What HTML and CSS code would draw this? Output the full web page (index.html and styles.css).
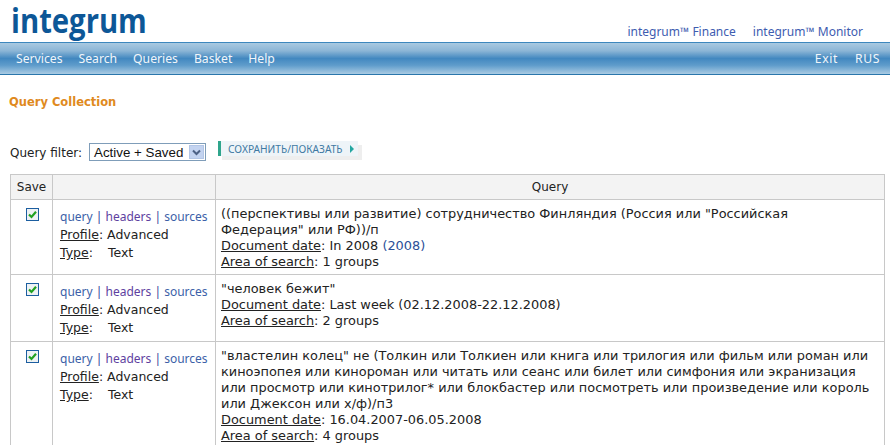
FILE: index.html
```html
<!DOCTYPE html>
<html lang="en">
<head>
<meta charset="utf-8">
<title>Query Collection</title>
<link rel="stylesheet" href="styles.css">
</head>
<body>
<header class="top">
  <div class="logo">integrum</div>
  <div class="products">
    <a href="#">integrum™ Finance</a>
    <a href="#">integrum™ Monitor</a>
  </div>
</header>
<nav class="menu">
  <div class="menu-group">
    <a href="#">Services</a><a href="#">Search</a><a href="#">Queries</a><a href="#">Basket</a><a href="#">Help</a>
  </div>
  <div class="menu-group right">
    <a href="#">Exit</a><a href="#">RUS</a>
  </div>
</nav>
<main class="content">
  <h1 class="title">Query Collection</h1>
  <div class="filter">
    <label class="filter-label">Query filter:</label>
    <div class="select"><span class="select-value">Active + Saved</span><span class="select-arrow"><svg width="9" height="7" viewBox="0 0 9 7"><path d="M1 1.5 4.5 5 8 1.5" fill="none" stroke="#4d6185" stroke-width="2"/></svg></span></div>
    <div class="save-btn"><span class="save-text">СОХРАНИТЬ/ПОКАЗАТЬ</span><span class="save-arrow"></span></div>
  </div>
  <table class="grid">
    <colgroup><col class="c1"><col class="c2"><col class="c3"></colgroup>
    <thead>
      <tr><th>Save</th><th></th><th>Query</th></tr>
    </thead>
    <tbody>
      <tr>
        <td class="check"><span class="box"><svg width="11" height="11" viewBox="0 0 11 11"><path d="M2 5.5 4.5 8 9 2.8" fill="none" stroke="#21a121" stroke-width="2.2"/></svg></span></td>
        <td class="meta"><div class="links"><a href="#" class="blue">query</a> | <a href="#">headers</a> | <a href="#" class="blue">sources</a></div><div><u>Profile</u>: Advanced</div><div><u>Type</u>:<span class="type-value">Text</span></div></td>
        <td class="query">((перспективы или развитие) сотрудничество Финляндия (Россия или "Российская Федерация" или РФ))/п<br><u>Document date</u>: In 2008 <span class="navy">(2008)</span><br><u>Area of search</u>: 1 groups</td>
      </tr>
      <tr>
        <td class="check"><span class="box"><svg width="11" height="11" viewBox="0 0 11 11"><path d="M2 5.5 4.5 8 9 2.8" fill="none" stroke="#21a121" stroke-width="2.2"/></svg></span></td>
        <td class="meta"><div class="links"><a href="#" class="blue">query</a> | <a href="#">headers</a> | <a href="#" class="blue">sources</a></div><div><u>Profile</u>: Advanced</div><div><u>Type</u>:<span class="type-value">Text</span></div></td>
        <td class="query">"человек бежит"<br><u>Document date</u>: Last week (02.12.2008-22.12.2008)<br><u>Area of search</u>: 2 groups</td>
      </tr>
      <tr>
        <td class="check"><span class="box"><svg width="11" height="11" viewBox="0 0 11 11"><path d="M2 5.5 4.5 8 9 2.8" fill="none" stroke="#21a121" stroke-width="2.2"/></svg></span></td>
        <td class="meta"><div class="links"><a href="#" class="blue">query</a> | <a href="#">headers</a> | <a href="#" class="blue">sources</a></div><div><u>Profile</u>: Advanced</div><div><u>Type</u>:<span class="type-value">Text</span></div></td>
        <td class="query">"властелин колец" не (Толкин или Толкиен или книга или трилогия или фильм или роман или киноэпопея или кинороман или читать или сеанс или билет или симфония или экранизация или просмотр или кинотрилог* или блокбастер или посмотреть или произведение или король или Джексон или х/ф)/п3<br><u>Document date</u>: 16.04.2007-06.05.2008<br><u>Area of search</u>: 4 groups</td>
      </tr>
    </tbody>
  </table>
</main>
</body>
</html>
```
FILE: styles.css
```css
html, body { margin: 0; padding: 0; height: 445px; overflow: hidden; background: #fff; }
body { font-family: "DejaVu Sans", Verdana, sans-serif; font-size: 12px; color: #222; }
a { text-decoration: none; }
.top { height: 42px; display: flex; justify-content: space-between; align-items: flex-end; box-sizing: border-box; }
.logo { font-family: "Open Sans", "Noto Sans", sans-serif; font-weight: 700; font-size: 34px; line-height: 36px; color: #0d5797; margin: 0 0 4px 11px; transform: scaleX(0.86); transform-origin: left center; }
.products { display: flex; gap: 17px; margin-right: 27px; margin-bottom: 2px; font-family: "Noto Sans", sans-serif; font-size: 12px; line-height: 16px; }
.products a { color: #3e5cb0; }
.menu { height: 33px; box-sizing: border-box; border-top: 1px solid #3d87bd; border-bottom: 1px solid #2a76ab; display: flex; justify-content: space-between; align-items: center; background: linear-gradient(#a9c9e1 0%, #8cb6d6 25%, #4288c0 50%, #5f9ccb 72%, #a9cbe3 100%); font-family: "Noto Sans", sans-serif; font-size: 12.2px; }
.menu-group { display: flex; gap: 16px; margin-left: 16px; }
.menu-group.right { margin: 0 10px 0 0; gap: 17px; letter-spacing: 0.6px; }
.menu a { color: #f2f6fa; }
.content { padding: 0 10px; }
.title { margin: 20px 0 0 -1px; font-family: "DejaVu Sans", sans-serif; font-size: 11.5px; line-height: 15px; font-weight: 700; color: #e08a1d; }
.filter { display: flex; align-items: flex-start; margin-top: 30px; height: 34px; }
.filter-label { margin-top: 5px; line-height: 16px; font-size: 12px; font-family: "DejaVu Sans", sans-serif; }
.select { width: 115px; height: 16px; margin: 3px 0 0 7px; border: 1px solid #7f9db9; display: flex; align-items: center; justify-content: space-between; box-sizing: content-box; font-family: "Liberation Sans", sans-serif; font-size: 13.33px; color: #111; }
.select-value { margin-left: 4px; }
.select-arrow { width: 15px; height: 14px; margin-right: 1px; background: #c3d3f0; border: 1px solid #b3c6e6; box-sizing: border-box; display: flex; align-items: center; justify-content: center; }
.save-btn { width: 140px; height: 15px; margin: 1px 0 0 12px; background: #eef4f8; border-left: 3px solid #2fa58c; box-shadow: 4px 4px 0 #eeeeee; display: flex; align-items: center; justify-content: space-between; box-sizing: border-box; }
.save-text { font-family: "Noto Sans", sans-serif; font-size: 10.2px; color: #3f7aa3; margin-left: 7px; white-space: nowrap; }
.save-arrow { width: 0; height: 0; border-left: 4px solid #23a6a0; border-top: 4px solid transparent; border-bottom: 4px solid transparent; margin-right: 4px; }
.grid { border-collapse: collapse; table-layout: fixed; width: 874px; }
.c1 { width: 42px; } .c2 { width: 163px; } .c3 { width: 669px; }
.grid th, .grid td { border: 1px solid #c8c8c8; }
.grid th { height: 24px; padding: 0; background: #f3f3f3; font-weight: 400; font-size: 12px; text-align: center; }
.grid td { vertical-align: top; }
.check { text-align: center; padding: 8px 0 0 2px; }
.box { display: inline-flex; width: 11px; height: 11px; border: 1px solid #1c5ea0; align-items: center; justify-content: center; background: #eef2f4; }
.meta { padding: 8px 0 4px 7px; font-size: 12.5px; line-height: 18px; white-space: nowrap; }
.links { font-family: "Noto Sans", sans-serif; font-size: 12px; color: #34409a; }
.links a { color: #5e3fa0; }
.links a.blue { color: #3c5fa8; }
.type-value { margin-left: 15px; }
.query { padding: 6px 12px 4px 5px; font-size: 12.9px; line-height: 16px; }
.navy { color: #2c4f98; }
```
